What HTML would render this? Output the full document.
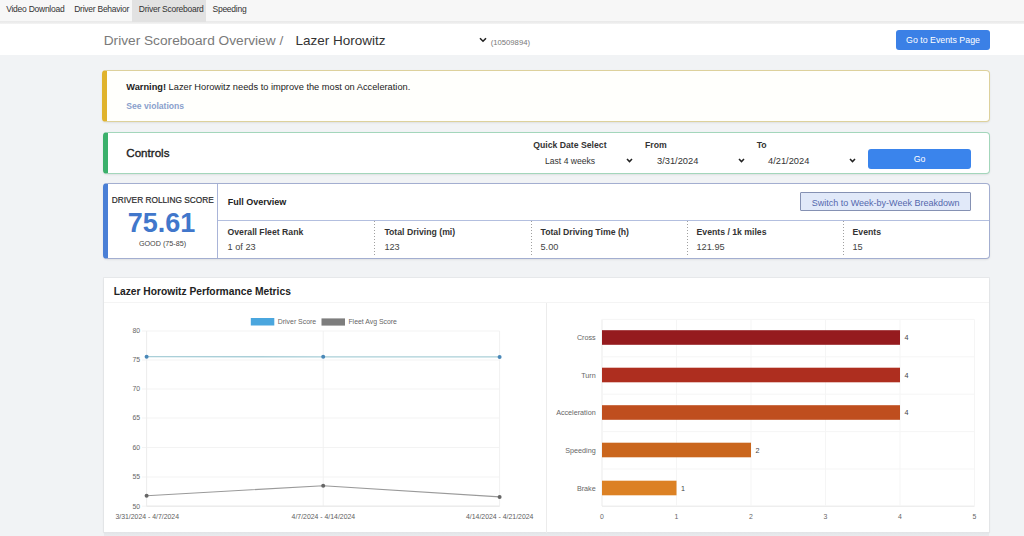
<!DOCTYPE html>
<html><head><meta charset="utf-8"><style>
html,body{margin:0;padding:0;width:1024px;height:536px;overflow:hidden;position:relative;font-family:"Liberation Sans", sans-serif;}
.t{position:absolute;white-space:nowrap;line-height:1;font-family:"Liberation Sans", sans-serif;}
</style></head><body>
<div style="position:absolute;left:0px;top:0px;width:1024px;height:536px;background:#f1f3f5"></div>
<div style="position:absolute;left:0px;top:0px;width:1024px;height:21px;background:#f7f7f7"></div>
<div style="position:absolute;left:0px;top:21px;width:1024px;height:3px;background:linear-gradient(#e9e9e9,#eeeeee 70%,#f6f6f6)"></div>
<div style="position:absolute;left:132px;top:0px;width:74px;height:22px;background:#e2e2e2"></div>
<div class="t" style="left:6.20px;top:5.00px;font-size:8.5px;color:#333;font-weight:400;letter-spacing:-0.25px;">Video Download</div>
<div class="t" style="left:74.20px;top:5.00px;font-size:8.5px;color:#333;font-weight:400;letter-spacing:-0.25px;">Driver Behavior</div>
<div class="t" style="left:138.80px;top:5.00px;font-size:8.5px;color:#333;font-weight:400;letter-spacing:-0.25px;">Driver Scoreboard</div>
<div class="t" style="left:212.50px;top:5.00px;font-size:8.5px;color:#333;font-weight:400;letter-spacing:-0.25px;">Speeding</div>
<div style="position:absolute;left:0px;top:24px;width:1024px;height:31px;background:#ffffff"></div>
<div class="t" style="left:103.70px;top:34.00px;font-size:13.7px;color:#7a7a7a;font-weight:400;">Driver Scoreboard Overview /</div>
<div class="t" style="left:295.50px;top:34.00px;font-size:13.5px;color:#333;font-weight:400;">Lazer Horowitz</div>
<svg style="position:absolute;left:479px;top:37px" width="8" height="6" viewBox="0 0 8 6"><path d="M1 1.2 L4 4.2 L7 1.2" stroke="#222" stroke-width="1.6" fill="none"/></svg>
<div class="t" style="left:490.70px;top:39.00px;font-size:7.7px;color:#777777;font-weight:400;">(10509894)</div>
<div style="position:absolute;left:896px;top:30px;width:94px;height:19.5px;background:#3b80e6;border-radius:3px"></div>
<div class="t" style="left:743.00px;width:400px;text-align:center;top:36.00px;font-size:8.8px;color:#fff;font-weight:400;">Go to Events Page</div>
<div style="position:absolute;left:102px;top:70px;width:888px;height:52px;box-sizing:border-box;background:#fffffc;border:1px solid #ddd19c;border-left:5px solid #e0b32c;border-radius:4px;box-shadow:0 1px 2px rgba(0,0,0,0.08)"></div>
<div class="t" style="left:126.30px;top:83.00px;font-size:9.25px;color:#222;font-weight:400;"><b>Warning!</b> Lazer Horowitz needs to improve the most on Acceleration.</div>
<div class="t" style="left:126.30px;top:102.00px;font-size:8.6px;color:#8a9fcc;font-weight:700;">See violations</div>
<div style="position:absolute;left:102.5px;top:131.5px;width:887.5px;height:42.0px;box-sizing:border-box;background:#fff;border:1px solid #a3d6bb;border-left:5px solid #3bb06b;border-radius:4px;box-shadow:0 1px 2px rgba(0,0,0,0.08)"></div>
<div class="t" style="left:126.30px;top:147.00px;font-size:11.6px;color:#1e1e1e;font-weight:400;-webkit-text-stroke:0.35px #1e1e1e;">Controls</div>
<div class="t" style="left:533.20px;top:141.00px;font-size:8.7px;color:#333;font-weight:700;">Quick Date Select</div>
<div class="t" style="left:645.00px;top:141.00px;font-size:8.7px;color:#333;font-weight:700;">From</div>
<div class="t" style="left:756.70px;top:141.00px;font-size:8.7px;color:#333;font-weight:700;">To</div>
<div class="t" style="left:545.00px;top:157.00px;font-size:8.6px;color:#333;font-weight:400;">Last 4 weeks</div>
<svg style="position:absolute;left:625.5px;top:157.5px" width="7" height="5" viewBox="0 0 7 5"><path d="M1 1 L3.5 3.6 L6 1" stroke="#222" stroke-width="1.5" fill="none"/></svg>
<div class="t" style="left:657.00px;top:157.00px;font-size:9.3px;color:#333;font-weight:400;">3/31/2024</div>
<svg style="position:absolute;left:737.5px;top:157.5px" width="7" height="5" viewBox="0 0 7 5"><path d="M1 1 L3.5 3.6 L6 1" stroke="#222" stroke-width="1.5" fill="none"/></svg>
<div class="t" style="left:768.00px;top:157.00px;font-size:9.3px;color:#333;font-weight:400;">4/21/2024</div>
<svg style="position:absolute;left:849.0px;top:157.5px" width="7" height="5" viewBox="0 0 7 5"><path d="M1 1 L3.5 3.6 L6 1" stroke="#222" stroke-width="1.5" fill="none"/></svg>
<div style="position:absolute;left:868.3px;top:149.3px;width:102.5px;height:19.299999999999983px;background:#3a84ec;border-radius:3px"></div>
<div class="t" style="left:719.50px;width:400px;text-align:center;top:155.00px;font-size:8.8px;color:#fff;font-weight:400;">Go</div>
<div style="position:absolute;left:103px;top:183px;width:887px;height:76px;box-sizing:border-box;background:#fff;border:1px solid #a3aed0;border-left:5px solid #4a7fd6;border-radius:4px;box-shadow:0 1px 2px rgba(0,0,0,0.08)"></div>
<div style="position:absolute;left:217px;top:184px;width:1px;height:74px;background:#a9b4d8"></div>
<div style="position:absolute;left:218px;top:219.6px;width:771px;height:1.0px;background:#b3bfdf"></div>
<div style="position:absolute;left:374px;top:220.6px;width:1px;height:36.70000000000002px;background:repeating-linear-gradient(#888 0 1px,transparent 1px 3px);opacity:0.8"></div>
<div style="position:absolute;left:530.5px;top:220.6px;width:1.0px;height:36.70000000000002px;background:repeating-linear-gradient(#888 0 1px,transparent 1px 3px);opacity:0.8"></div>
<div style="position:absolute;left:686.5px;top:220.6px;width:1.0px;height:36.70000000000002px;background:repeating-linear-gradient(#888 0 1px,transparent 1px 3px);opacity:0.8"></div>
<div style="position:absolute;left:842.5px;top:220.6px;width:1.0px;height:36.70000000000002px;background:repeating-linear-gradient(#888 0 1px,transparent 1px 3px);opacity:0.8"></div>
<div class="t" style="left:111.80px;top:196.00px;font-size:8.3px;color:#2a2a2a;font-weight:400;-webkit-text-stroke:0.2px #2a2a2a;">DRIVER ROLLING SCORE</div>
<div class="t" style="left:-38.50px;width:400px;text-align:center;top:210.00px;font-size:27px;color:#4177cb;font-weight:700;">75.61</div>
<div class="t" style="left:-37.50px;width:400px;text-align:center;top:240.00px;font-size:7.2px;color:#444;font-weight:400;">GOOD (75-85)</div>
<div class="t" style="left:227.70px;top:198.00px;font-size:9px;color:#222;font-weight:700;">Full Overview</div>
<div style="position:absolute;left:800.4px;top:192.4px;width:170.39999999999998px;height:19.0px;box-sizing:border-box;background:#e1e9f9;border:1px solid #8591b3;border-radius:1px"></div>
<div class="t" style="left:685.60px;width:400px;text-align:center;top:199.00px;font-size:9px;color:#5468ad;font-weight:400;">Switch to Week-by-Week Breakdown</div>
<div class="t" style="left:227.50px;top:228.00px;font-size:8.7px;color:#333;font-weight:700;">Overall Fleet Rank</div>
<div class="t" style="left:227.50px;top:243.00px;font-size:9.2px;color:#444;font-weight:400;">1 of 23</div>
<div class="t" style="left:384.40px;top:228.00px;font-size:8.7px;color:#333;font-weight:700;">Total Driving (mi)</div>
<div class="t" style="left:384.40px;top:243.00px;font-size:9.2px;color:#444;font-weight:400;">123</div>
<div class="t" style="left:540.50px;top:228.00px;font-size:8.7px;color:#333;font-weight:700;">Total Driving Time (h)</div>
<div class="t" style="left:540.50px;top:243.00px;font-size:9.2px;color:#444;font-weight:400;">5.00</div>
<div class="t" style="left:696.50px;top:228.00px;font-size:8.7px;color:#333;font-weight:700;">Events / 1k miles</div>
<div class="t" style="left:696.50px;top:243.00px;font-size:9.2px;color:#444;font-weight:400;">121.95</div>
<div class="t" style="left:852.50px;top:228.00px;font-size:8.7px;color:#333;font-weight:700;">Events</div>
<div class="t" style="left:852.50px;top:243.00px;font-size:9.2px;color:#444;font-weight:400;">15</div>
<div style="position:absolute;left:104px;top:278px;width:885px;height:254px;background:#fff;box-shadow:0 0 0 1px rgba(0,0,0,0.035),0 1px 3px rgba(0,0,0,0.06)"></div>
<div style="position:absolute;left:104px;top:532px;width:885px;height:4px;background:linear-gradient(#e2e4e7,#e9ebee)"></div>
<div style="position:absolute;left:104px;top:302px;width:885px;height:1px;background:#f4f4f4"></div>
<div class="t" style="left:113.70px;top:287.00px;font-size:10.25px;color:#222;font-weight:700;">Lazer Horowitz Performance Metrics</div>
<div style="position:absolute;left:545.5px;top:303px;width:1.0px;height:229.5px;background:#ececec"></div>
<svg style="position:absolute;left:0;top:0" width="1024" height="536"><line x1="142" x2="499.6" y1="331" y2="331" stroke="#f3f3f3" stroke-width="1"/><line x1="142" x2="499.6" y1="360" y2="360" stroke="#f3f3f3" stroke-width="1"/><line x1="142" x2="499.6" y1="389" y2="389" stroke="#f3f3f3" stroke-width="1"/><line x1="142" x2="499.6" y1="418" y2="418" stroke="#f3f3f3" stroke-width="1"/><line x1="142" x2="499.6" y1="447.5" y2="447.5" stroke="#f3f3f3" stroke-width="1"/><line x1="142" x2="499.6" y1="477" y2="477" stroke="#f3f3f3" stroke-width="1"/><line x1="142" x2="499.6" y1="506.2" y2="506.2" stroke="#f3f3f3" stroke-width="1"/><line x1="146.6" x2="146.6" y1="331" y2="506" stroke="#f1f1f1" stroke-width="1"/><line x1="323.2" x2="323.2" y1="331" y2="506" stroke="#f1f1f1" stroke-width="1"/><line x1="499.6" x2="499.6" y1="331" y2="506" stroke="#f1f1f1" stroke-width="1"/><line x1="146.6" x2="146.6" y1="331" y2="506.2" stroke="#eeeeee" stroke-width="1"/><line x1="146.6" x2="499.6" y1="506.2" y2="506.2" stroke="#e6e6e6" stroke-width="1"/><polyline points="146.6,356.7 323.2,356.8 499.6,356.9" fill="none" stroke="#aacfd8" stroke-width="1.3"/><circle cx="146.6" cy="356.7" r="2" fill="#4a88b8"/><circle cx="323.2" cy="356.8" r="2" fill="#4a88b8"/><circle cx="499.6" cy="356.9" r="2" fill="#4a88b8"/><polyline points="146.6,495.7 323.2,485.7 499.6,496.9" fill="none" stroke="#9a9a9a" stroke-width="1.1"/><circle cx="146.6" cy="495.7" r="2" fill="#666"/><circle cx="323.2" cy="485.7" r="2" fill="#666"/><circle cx="499.6" cy="496.9" r="2" fill="#666"/><rect x="250.8" y="318" width="23.5" height="7.5" fill="#4aa6de"/><rect x="321.5" y="318.4" width="23.5" height="7.2" fill="#7d7d7d"/><line x1="602" x2="602" y1="319.4" y2="506" stroke="#ebebeb" stroke-width="1"/><line x1="602" x2="974.5" y1="506.2" y2="506.2" stroke="#e6e6e6" stroke-width="1"/><line x1="676.5" x2="676.5" y1="319.4" y2="506" stroke="#f5f5f5" stroke-width="1"/><line x1="751.0" x2="751.0" y1="319.4" y2="506" stroke="#f5f5f5" stroke-width="1"/><line x1="825.5" x2="825.5" y1="319.4" y2="506" stroke="#f5f5f5" stroke-width="1"/><line x1="900.0" x2="900.0" y1="319.4" y2="506" stroke="#f5f5f5" stroke-width="1"/><line x1="974.5" x2="974.5" y1="319.4" y2="506" stroke="#f5f5f5" stroke-width="1"/><line x1="602" x2="974.5" y1="319.4" y2="319.4" stroke="#f5f5f5" stroke-width="1"/><line x1="602" x2="974.5" y1="356.79999999999995" y2="356.79999999999995" stroke="#f5f5f5" stroke-width="1"/><line x1="602" x2="974.5" y1="394.2" y2="394.2" stroke="#f5f5f5" stroke-width="1"/><line x1="602" x2="974.5" y1="431.59999999999997" y2="431.59999999999997" stroke="#f5f5f5" stroke-width="1"/><line x1="602" x2="974.5" y1="469.0" y2="469.0" stroke="#f5f5f5" stroke-width="1"/><rect x="602" y="330.2" width="298.0" height="14.6" fill="#951b1e"/><rect x="602" y="367.7" width="298.0" height="14.6" fill="#ae2e1f"/><rect x="602" y="405.2" width="298.0" height="14.6" fill="#bf4e1e"/><rect x="602" y="442.7" width="149.0" height="14.6" fill="#ca661d"/><rect x="602" y="480.7" width="74.5" height="14.6" fill="#dc8124"/></svg>
<div class="t" style="right:883.80px;top:328.00px;font-size:6.9px;color:#666;font-weight:400;">80</div>
<div class="t" style="right:883.80px;top:357.00px;font-size:6.9px;color:#666;font-weight:400;">75</div>
<div class="t" style="right:883.80px;top:386.00px;font-size:6.9px;color:#666;font-weight:400;">70</div>
<div class="t" style="right:883.80px;top:415.00px;font-size:6.9px;color:#666;font-weight:400;">65</div>
<div class="t" style="right:883.80px;top:445.00px;font-size:6.9px;color:#666;font-weight:400;">60</div>
<div class="t" style="right:883.80px;top:474.00px;font-size:6.9px;color:#666;font-weight:400;">55</div>
<div class="t" style="right:883.80px;top:504.00px;font-size:6.9px;color:#666;font-weight:400;">50</div>
<div class="t" style="left:277.80px;top:319.00px;font-size:6.9px;color:#666;font-weight:400;">Driver Score</div>
<div class="t" style="left:348.40px;top:319.00px;font-size:6.9px;color:#666;font-weight:400;">Fleet Avg Score</div>
<div class="t" style="left:-52.80px;width:400px;text-align:center;top:514.00px;font-size:6.9px;color:#5e5e5e;font-weight:400;">3/31/2024 - 4/7/2024</div>
<div class="t" style="left:123.40px;width:400px;text-align:center;top:514.00px;font-size:6.9px;color:#5e5e5e;font-weight:400;">4/7/2024 - 4/14/2024</div>
<div class="t" style="left:299.70px;width:400px;text-align:center;top:514.00px;font-size:6.9px;color:#5e5e5e;font-weight:400;">4/14/2024 - 4/21/2024</div>
<div class="t" style="right:428.30px;top:334.00px;font-size:7.2px;color:#666;font-weight:400;">Cross</div>
<div class="t" style="left:904.60px;top:334.00px;font-size:7.2px;color:#444;font-weight:400;">4</div>
<div class="t" style="right:428.30px;top:372.00px;font-size:7.2px;color:#666;font-weight:400;">Turn</div>
<div class="t" style="left:904.60px;top:372.00px;font-size:7.2px;color:#444;font-weight:400;">4</div>
<div class="t" style="right:428.30px;top:409.00px;font-size:7.2px;color:#666;font-weight:400;">Acceleration</div>
<div class="t" style="left:904.60px;top:409.00px;font-size:7.2px;color:#444;font-weight:400;">4</div>
<div class="t" style="right:428.30px;top:447.00px;font-size:7.2px;color:#666;font-weight:400;">Speeding</div>
<div class="t" style="left:755.60px;top:447.00px;font-size:7.2px;color:#444;font-weight:400;">2</div>
<div class="t" style="right:428.30px;top:485.00px;font-size:7.2px;color:#666;font-weight:400;">Brake</div>
<div class="t" style="left:681.10px;top:485.00px;font-size:7.2px;color:#444;font-weight:400;">1</div>
<div class="t" style="left:402.00px;width:400px;text-align:center;top:514.00px;font-size:6.9px;color:#666;font-weight:400;">0</div>
<div class="t" style="left:476.50px;width:400px;text-align:center;top:514.00px;font-size:6.9px;color:#666;font-weight:400;">1</div>
<div class="t" style="left:551.00px;width:400px;text-align:center;top:514.00px;font-size:6.9px;color:#666;font-weight:400;">2</div>
<div class="t" style="left:625.50px;width:400px;text-align:center;top:514.00px;font-size:6.9px;color:#666;font-weight:400;">3</div>
<div class="t" style="left:700.00px;width:400px;text-align:center;top:514.00px;font-size:6.9px;color:#666;font-weight:400;">4</div>
<div class="t" style="left:774.50px;width:400px;text-align:center;top:514.00px;font-size:6.9px;color:#666;font-weight:400;">5</div>
</body></html>
